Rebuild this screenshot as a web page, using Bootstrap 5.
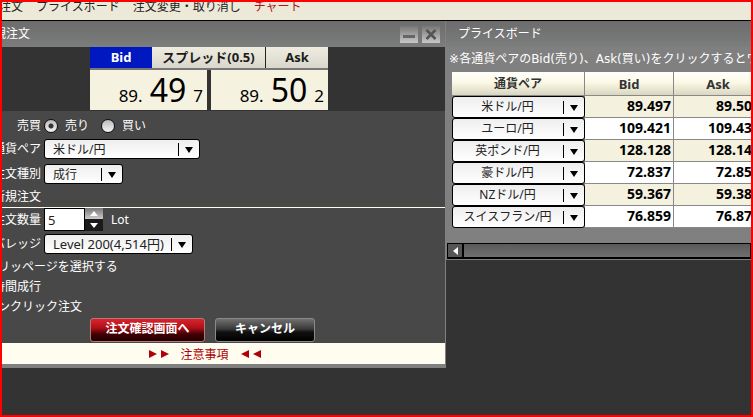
<!DOCTYPE html>
<html lang="ja">
<head>
<meta charset="utf-8">
<meta name="viewport" content="width=device-width, initial-scale=1">
<title>新規注文</title>
<link href="https://cdn.jsdelivr.net/npm/bootstrap@5.3.0/dist/css/bootstrap.min.css" rel="stylesheet">
<style>
body{background:#333;font-family:"Noto Sans","Noto Sans CJK JP",sans-serif;font-size:12px;line-height:18px;color:#fff}
.desk{min-height:100vh;border:2px solid #f00}
.topmenu{background:#ece9d8;border-bottom:1px solid #000;padding-bottom:8px;margin-left:-27px;gap:13px;line-height:10px}
.topmenu a{color:#222;text-decoration:none}
.topmenu a.chart-link{color:#b0141c}
.workspace{margin-left:-20px}
.order-win{flex:0 0 auto;width:60.35%;border-right:1px solid #808080;border-bottom:4px solid #808080}
.title-bar{height:26px;background:linear-gradient(#6c6c6c,#7c7d7d);padding:0 5px 0 0}
.title-bar h2{font-size:12px;line-height:18px;font-weight:400;margin:0}
.win-btn{width:18px;height:17px;padding:0;border:0;background:linear-gradient(#777,#c9c9c9);display:flex}
.quote{background:#333;padding:0 0 1px 108px}
.quote-box{width:238px}
.quote-head{background:linear-gradient(#efecdf,#d9d7cd);color:#1b1b1b;font-weight:700;font-size:13px;line-height:21px;border-bottom:2px solid #777;height:23px}
.q-side{width:62px}
.q-bid{background:#0018c0;color:#fff}
.q-mid{border-right:1px solid #222}
.q-price{background:#f5f2e0;color:#000;height:40px;padding:0 4px 4px 0;font-size:17px;border:0;line-height:24px}
.q-price b{font-size:32px;font-weight:400;line-height:24px;margin:0 7px}
.order-form{background:#484848;padding-left:4px}
.f-row{display:flex;align-items:center;height:26px}
.f-row.tight{height:24px}
.f-row.slim{height:20px}
.f-label{display:flex;justify-content:flex-end;width:55px;white-space:nowrap;margin-right:3px}
.dial-label{margin:0 12px 0 7px}
.rule{border-bottom:1px solid #fffdf0;box-sizing:content-box}
.form-check-input.dial{width:14px;height:14px;margin:0;border:1px solid #111;background:linear-gradient(#bbb,#f4f4f4);flex:none}
.form-check-input.dial:checked{background:radial-gradient(circle,#333 0 2px,transparent 3px),linear-gradient(#bbb,#f4f4f4)}
.form-select.pick{height:20px;padding:0 22px 0 8px;font-size:12px;line-height:17px;color:#222;border:1px solid #000;border-radius:3px;
background:url("data:image/svg+xml,%3Csvg xmlns='http://www.w3.org/2000/svg' width='16' height='13'%3E%3Cpath d='M.5 0v13' stroke='%23000'/%3E%3Cpath d='M7 4h8l-4 6z'/%3E%3C/svg%3E") right 5px center/16px 13px no-repeat,linear-gradient(#eee,#fff)}
.w-pair{width:156px}
.w-type{width:79px}
.form-select.w-lev{width:149px;font-size:13px}
.qty{width:41px;height:23px;border:1px solid #000;border-radius:0;padding:0 3px;font-size:13px;color:#222}
.spin{width:18px}
.spin button{height:11px;border:0;padding:0;display:flex;justify-content:center;align-items:center;background:linear-gradient(#777,#ccc)}
.spin button + button{height:12px;background:#1a1a1a}
.actions{padding:1px 0 1px 104px;gap:10px}
.act{height:24px;font-size:12px;font-weight:700;line-height:18px;padding:0 0 2px;color:#fff;border:1px solid #8a8a8a;border-radius:3px}
.act-go{width:115px;background:linear-gradient(#d8242c,#b0101a 40%,#400004 70%,#200002);border-color:#b77}
.act-no{width:100px;background:linear-gradient(#707070,#3a3a3a 45%,#101010 60%,#000)}
.notice{background:#fffdf0;line-height:20px;padding-right:18px;font-family:"Noto Sans CJK JP",sans-serif}
.notice a{color:#b00008;text-decoration:none;display:inline-flex;gap:12px}
.arrows{display:inline-flex;gap:4px;align-items:center}
.board-win{background:#808080;min-width:0}
.board-win .title-bar{padding-left:12px}
.note{font-family:"DejaVu Sans","Noto Sans CJK JP",sans-serif;padding:3px 0 4px 3px;white-space:nowrap;margin:0}
.board{table-layout:fixed;width:311px;margin:0 0 0 6px;border-collapse:separate;border-spacing:0;color:#000}
.board th{height:24px;padding:0;text-align:center;font-size:13px;color:#333;background:linear-gradient(#fffffb,#fbf9e6 45%,#d9d6c0);border-right:1px solid #888;border-bottom:1px solid #888}
.board th:first-child{font-size:12px;width:133px}
.board td{height:22px;padding:0 2px 2px 0;text-align:right;font-size:14px;line-height:18px;font-weight:700;background:#fff;border-right:1px solid #888;border-bottom:1px solid #888}
.board tr:nth-child(odd) td{background:#f4f1df}
.board td:first-child{padding:0;border:0;background:#808080!important}
.board .pick{width:133px;height:22px;text-align:center;text-align-last:center;padding-left:0;padding-bottom:2px}
.hscroll{margin:15px 0 1px 1px;height:16px;border:1px solid #000;border-bottom-width:2px;background:linear-gradient(#5a5a5a,#6f6f6f)}
.hscroll button{width:16px;border:0;border-right:2px solid #000;padding:0;background:#555;display:flex;align-items:center;justify-content:center}
</style>
<script src="https://cdn.jsdelivr.net/npm/bootstrap@5.3.0/dist/js/bootstrap.bundle.min.js"></script>
</head>
<body>
<div class="desk overflow-hidden">
  <nav class="topmenu d-flex text-nowrap">
    <a href="#">新規注文</a><a href="#">プライスボード</a><a href="#">注文変更・取り消し</a><a href="#" class="chart-link">チャート</a>
  </nav>
  <main class="workspace d-flex align-items-start">
    <section class="order-win">
      <header class="title-bar d-flex align-items-center">
        <h2 class="me-auto">新規注文</h2>
        <div class="d-flex gap-1">
          <button type="button" class="win-btn" aria-label="最小化"><svg width="18" height="17"><path d="M3 9h12v3H3z" fill="#666"/></svg></button>
          <button type="button" class="win-btn" aria-label="閉じる"><svg width="18" height="17"><path d="M4.500 4l9 9M13.500 4l-9 9" stroke="#555" stroke-width="2.500"/></svg></button>
        </div>
      </header>
      <div class="quote">
        <div class="quote-box">
          <div class="quote-head d-flex text-center">
            <div class="q-side q-bid">Bid</div><div class="q-mid flex-fill">スプレッド(0.5)</div><div class="q-side">Ask</div>
          </div>
          <div class="d-flex gap-1">
            <button type="button" class="q-price flex-fill d-flex justify-content-end align-items-baseline pt-2">89.<b>49</b>7</button>
            <button type="button" class="q-price flex-fill d-flex justify-content-end align-items-baseline pt-2">89.<b>50</b>2</button>
          </div>
        </div>
      </div>
      <form class="order-form">
        <div class="f-row pt-1">
          <span class="f-label">売買</span>
          <input class="form-check-input dial" type="radio" name="side" id="sell" checked><label class="dial-label" for="sell">売り</label>
          <input class="form-check-input dial" type="radio" name="side" id="buy"><label class="dial-label" for="buy">買い</label>
        </div>
        <div class="f-row tight"><label class="f-label" for="pair">通貨ペア</label><select id="pair" class="form-select pick w-pair"><option>米ドル/円</option></select></div>
        <div class="f-row"><label class="f-label" for="type">注文種別</label><select id="type" class="form-select pick w-type"><option>成行</option></select></div>
        <div class="f-row slim rule"><span class="f-label">新規注文</span></div>
        <div class="f-row h-auto">
          <label class="f-label" for="qty">注文数量</label><input id="qty" class="form-control qty" value="5">
          <div class="spin d-flex flex-column">
            <button type="button" aria-label="増やす"><svg width="8" height="5"><path d="M0 5h8L4 0z" fill="#fff"/></svg></button>
            <button type="button" aria-label="減らす"><svg width="8" height="5"><path d="M0 0h8L4 5z" fill="#fff"/></svg></button>
          </div>
          <span class="ms-2">Lot</span>
        </div>
        <div class="f-row"><label class="f-label" for="lev">レバレッジ</label><select id="lev" class="form-select pick w-lev"><option>Level 200(4,514円)</option></select></div>
        <div class="f-row slim">スリッページを選択する</div>
        <div class="f-row slim"><span class="f-label">時間成行</span></div>
        <div class="f-row slim">ワンクリック注文</div>
        <div class="d-flex actions">
          <button type="button" class="act act-go">注文確認画面へ</button>
          <button type="button" class="act act-no">キャンセル</button>
        </div>
      </form>
      <div class="notice text-center"><a href="#"><span class="arrows"><svg width="8" height="8"><path d="M0 0v8l8-4z" fill="#b00008"/></svg><svg width="8" height="8"><path d="M0 0v8l8-4z" fill="#b00008"/></svg></span><span>注意事項</span><span class="arrows"><svg width="8" height="8"><path d="M8 0v8L0 4z" fill="#b00008"/></svg><svg width="8" height="8"><path d="M8 0v8L0 4z" fill="#b00008"/></svg></span></a></div>
    </section>
    <section class="board-win flex-fill overflow-hidden">
      <header class="title-bar d-flex align-items-center"><h2>プライスボード</h2></header>
      <p class="note">※各通貨ペアのBid(売り)、Ask(買い)をクリックするとワンクリック注文</p>
      <table class="board">
        <thead><tr><th>通貨ペア</th><th>Bid</th><th>Ask</th></tr></thead>
        <tbody>
          <tr><td><select class="form-select pick" aria-label="通貨ペア1"><option>米ドル/円</option></select></td><td>89.497</td><td>89.502</td></tr>
          <tr><td><select class="form-select pick" aria-label="通貨ペア2"><option>ユーロ/円</option></select></td><td>109.421</td><td>109.431</td></tr>
          <tr><td><select class="form-select pick" aria-label="通貨ペア3"><option>英ポンド/円</option></select></td><td>128.128</td><td>128.148</td></tr>
          <tr><td><select class="form-select pick" aria-label="通貨ペア4"><option>豪ドル/円</option></select></td><td>72.837</td><td>72.857</td></tr>
          <tr><td><select class="form-select pick" aria-label="通貨ペア5"><option>NZドル/円</option></select></td><td>59.367</td><td>59.387</td></tr>
          <tr><td><select class="form-select pick" aria-label="通貨ペア6"><option>スイスフラン/円</option></select></td><td>76.859</td><td>76.879</td></tr>
        </tbody>
      </table>
      <div class="hscroll d-flex"><button type="button" aria-label="左へスクロール"><svg width="5" height="8"><path d="M5 0v8L0 4z" fill="#fff"/></svg></button></div>
    </section>
  </main>
</div>
</body>
</html>
